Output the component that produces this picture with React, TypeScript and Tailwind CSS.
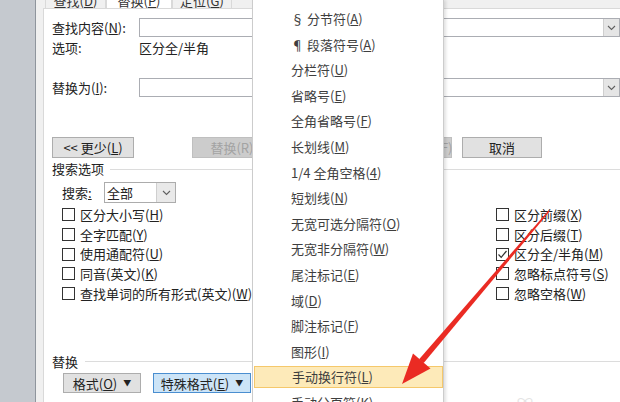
import React from "react";

const menuItems = [
  { pre: "§ 分节符", key: "A" },
  { pre: "¶ 段落符号", key: "A" },
  { pre: "分栏符", key: "U" },
  { pre: "省略号", key: "E" },
  { pre: "全角省略号", key: "F" },
  { pre: "长划线", key: "M" },
  { pre: "1/4 全角空格", key: "4" },
  { pre: "短划线", key: "N" },
  { pre: "无宽可选分隔符", key: "O" },
  { pre: "无宽非分隔符", key: "W" },
  { pre: "尾注标记", key: "E" },
  { pre: "域", key: "D" },
  { pre: "脚注标记", key: "F" },
  { pre: "图形", key: "I" },
  { pre: "手动换行符", key: "L" },
  { pre: "手动分页符", key: "K" },
];

const leftChecks = [
  { text: "区分大小写", key: "H" },
  { text: "全字匹配", key: "Y" },
  { text: "使用通配符", key: "U" },
  { text: "同音(英文)", key: "K" },
  { text: "查找单词的所有形式(英文)", key: "W" },
];

const rightChecks = [
  { text: "区分前缀", key: "X", checked: false },
  { text: "区分后缀", key: "T", checked: false },
  { text: "区分全/半角", key: "M", checked: true },
  { text: "忽略标点符号", key: "S", checked: false },
  { text: "忽略空格", key: "W", checked: false },
];

const Chevron = () => (
  <svg width="9" height="6" viewBox="0 0 9 6">
    <path d="M1 1 L4.5 4.5 L8 1" stroke="#606060" strokeWidth="1.1" fill="none" />
  </svg>
);

const Key = ({ k }: { k: string }) => <span className="underline">{k}</span>;

const Check = ({ text, k, checked }: { text: string; k: string; checked?: boolean }) => (
  <div className="h-[19.7px] flex items-center gap-[5px]">
    <div className="w-[13px] h-[13px] border border-[#333] bg-white flex items-center justify-center">
      {checked && (
        <svg width="11" height="11" viewBox="0 0 11 11">
          <path d="M1.5 5.5 L4.2 8.3 L9.5 2" stroke="#333" strokeWidth="1.2" fill="none" />
        </svg>
      )}
    </div>
    <span className="whitespace-nowrap">
      {text}(<Key k={k} />)
    </span>
  </div>
);

const App = () => {
  return (
    <div className="w-[620px] h-[402px] overflow-hidden relative flex font-['Noto_Sans_CJK_SC',sans-serif] text-[13px] text-[#222] bg-[#f0f0f0]">
      {/* desktop strip */}
      <div className="w-[36px] shrink-0 bg-[#c5c9cf] border-r border-[#8f959d]" />

      {/* dialog */}
      <div className="flex-1 flex flex-col pl-[7px] bg-[#f0f0f0] min-w-0">
        {/* tabs, mostly scrolled off the top */}
        <div className="h-[8px] flex items-end shrink-0">
          <div className="flex h-[20px] mb-[-1px] ml-[2px] text-[#333] leading-none">
            <div className="w-[61px] border border-[#d9d9d9] bg-[#f0f0f0] flex items-end justify-center pb-[1px]">
              <span>查找(<Key k="D" />)</span>
            </div>
            <div className="w-[66px] border border-b-0 border-[#d9d9d9] bg-white flex items-end justify-center pb-[2px]">
              <span>替换(<Key k="P" />)</span>
            </div>
            <div className="w-[60px] border border-[#d9d9d9] bg-[#f0f0f0] flex items-end justify-center pb-[1px]">
              <span>定位(<Key k="G" />)</span>
            </div>
          </div>
        </div>

        {/* panel */}
        <div className="flex-1 bg-white border-l border-t border-[#d9d9d9] pl-[8px] flex flex-col">
          <div className="mt-[9px] h-[19px] flex items-center">
            <div className="w-[87px] whitespace-nowrap">查找内容(<Key k="N" />):</div>
            <div className="flex-1 h-[19px] border border-[#abadb3] flex justify-end">
              <div className="w-[16px] h-full bg-[#e5e5e5] border-l border-[#cfcfcf] flex items-center justify-center">
                <Chevron />
              </div>
            </div>
          </div>

          <div className="mt-[1px] h-[20px] flex items-center">
            <div className="w-[87px]">选项:</div>
            <div>区分全/半角</div>
          </div>

          <div className="mt-[20px] h-[19px] flex items-center">
            <div className="w-[87px] whitespace-nowrap">替换为(<Key k="I" />):</div>
            <div className="flex-1 h-[19px] border border-[#abadb3] flex justify-end">
              <div className="w-[16px] h-full bg-[#e5e5e5] border-l border-[#cfcfcf] flex items-center justify-center">
                <Chevron />
              </div>
            </div>
          </div>

          {/* buttons */}
          <div className="mt-[40px] h-[21px] flex items-stretch">
            <div className="w-[82px] bg-[#e1e1e1] border border-[#adadad] flex items-center justify-center whitespace-nowrap">
              &lt;&lt; 更少(<Key k="L" />)
            </div>
            <div className="ml-[58px] w-[80px] bg-[#cccccc] border border-[#bfbfbf] text-[#a3a3a3] flex items-center justify-center">
              替换(R)
            </div>
            <div className="ml-[10px] w-[80px] bg-[#cccccc] border border-[#bfbfbf]" />
            <div className="ml-[10px] w-[80px] bg-[#cccccc] border border-[#bfbfbf] text-[#a3a3a3] flex items-center justify-center whitespace-nowrap">
              查找下一处(F)
            </div>
            <div className="ml-[10px] w-[80px] bg-[#e1e1e1] border border-[#adadad] flex items-center justify-center">
              取消
            </div>
          </div>

          {/* search options */}
          <div className="mt-[2px] h-[18px] flex items-center gap-[6px]">
            <span>搜索选项</span>
            <div className="flex-1 h-px bg-[#dcdcdc]" />
          </div>

          <div className="mt-[4px] h-[21px] pl-[10px] flex items-center">
            <div className="w-[42px]">
              搜索<Key k=":" />
            </div>
            <div className="w-[72px] h-[21px] border border-[#acacac] flex items-center">
              <span className="pl-[2px] flex-1">全部</span>
              <div className="w-[19px] h-full bg-[#e9e9e9] border-l border-[#cfcfcf] flex items-center justify-center">
                <Chevron />
              </div>
            </div>
          </div>

          <div className="mt-[2px] pl-[10px] grid grid-cols-[434px_1fr]">
            <div className="flex flex-col">
              {leftChecks.map((c) => (
                <Check key={c.text} text={c.text} k={c.key} />
              ))}
            </div>
            <div className="flex flex-col">
              {rightChecks.map((c) => (
                <Check key={c.text} text={c.text} k={c.key} checked={c.checked} />
              ))}
            </div>
          </div>

          {/* replace group */}
          <div className="mt-[49px] h-[18px] flex items-center gap-[7px]">
            <span>替换</span>
            <div className="flex-1 h-px bg-[#dcdcdc]" />
          </div>

          <div className="mt-[3px] h-[20px] pl-[11px] flex items-stretch gap-[12px]">
            <div className="w-[78px] bg-[#e1e1e1] border border-[#adadad] flex items-center justify-center gap-[6px]">
              <span>格式(<Key k="O" />)</span>
              <span className="text-[8px]">▼</span>
            </div>
            <div className="w-[98px] bg-[#cce4f7] border border-[#4a8ed0] flex items-center justify-center gap-[6px]">
              <span>特殊格式(<Key k="E" />)</span>
              <span className="text-[8px]">▼</span>
            </div>
          </div>
        </div>
      </div>

      {/* special format menu */}
      <div className="absolute left-[252px] top-[-2px] w-[192px] h-[406px] bg-white border border-[#cccccc] shadow-[2px_2px_3px_rgba(0,0,0,0.12)] pt-[7px] text-[#3e3e3e]">
        {menuItems.map((m, i) => (
          <div key={i} className="h-[25.6px] py-[1.5px] pl-[1px]">
            <div
              className={`h-full flex items-center pl-[37px] whitespace-nowrap ${
                i === 14 ? "bg-[#fdeab9] border border-[#f5c86b] pl-[36px]" : ""
              }`}
            >
              {m.pre}(<Key k={m.key} />)
            </div>
          </div>
        ))}
      </div>

      {/* faint watermark */}
      <div className="absolute left-[517px] top-[392px] text-[#e4e4e4] text-[16px] leading-none">∞</div>

      {/* red arrow */}
      <svg className="absolute left-0 top-0 pointer-events-none" width="620" height="402" viewBox="0 0 620 402">
        <polygon
          points="549.6,211.5 548.4,210.5 419.1,359.2 423.7,363.0"
          fill="#ea2b23"
        />
        <polygon points="402,384 413,353.5 430.5,368.5" fill="#ea2b23" />
      </svg>
    </div>
  );
};

export default App;
